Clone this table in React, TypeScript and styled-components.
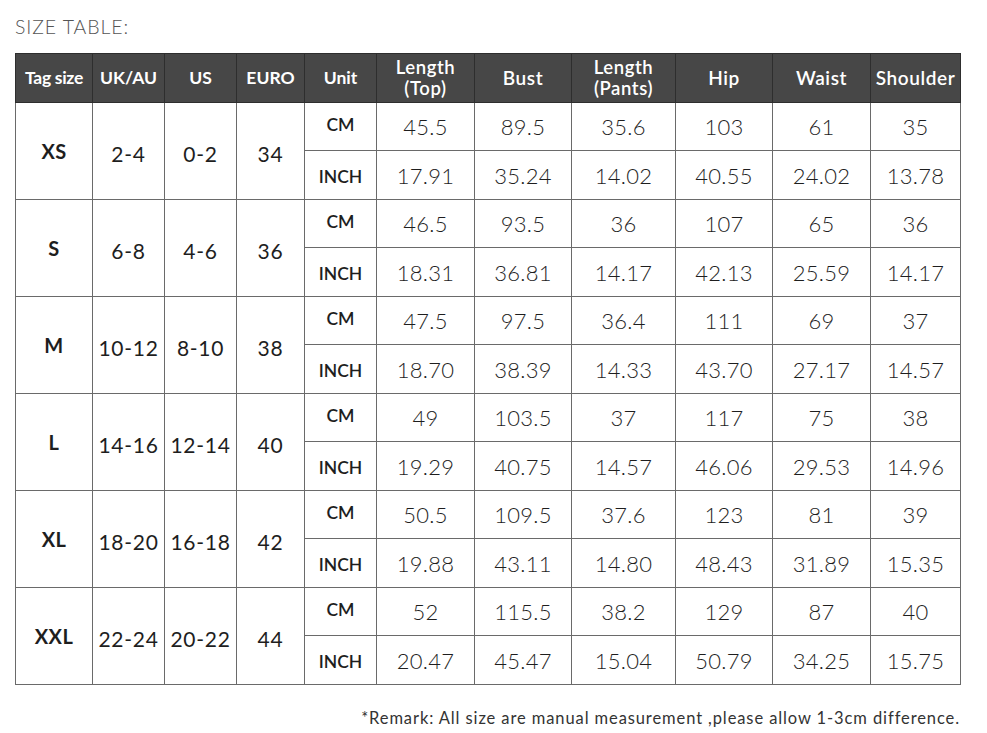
import React from 'react'
import styled, { createGlobalStyle } from 'styled-components'

const GlobalStyle = createGlobalStyle`
  html, body {
    margin: 0;
    padding: 0;
    background: #fff;
  }
  body {
    font-family: Lato, "Open Sans", "Liberation Sans", sans-serif;
    color: #222;
  }
`

type Row = {
  tag: string
  uk: string
  us: string
  euro: string
  cm: string[]
  inch: string[]
}

const rows: Row[] = [
  { tag: 'XS', uk: '2-4', us: '0-2', euro: '34', cm: ['45.5', '89.5', '35.6', '103', '61', '35'], inch: ['17.91', '35.24', '14.02', '40.55', '24.02', '13.78'] },
  { tag: 'S', uk: '6-8', us: '4-6', euro: '36', cm: ['46.5', '93.5', '36', '107', '65', '36'], inch: ['18.31', '36.81', '14.17', '42.13', '25.59', '14.17'] },
  { tag: 'M', uk: '10-12', us: '8-10', euro: '38', cm: ['47.5', '97.5', '36.4', '111', '69', '37'], inch: ['18.70', '38.39', '14.33', '43.70', '27.17', '14.57'] },
  { tag: 'L', uk: '14-16', us: '12-14', euro: '40', cm: ['49', '103.5', '37', '117', '75', '38'], inch: ['19.29', '40.75', '14.57', '46.06', '29.53', '14.96'] },
  { tag: 'XL', uk: '18-20', us: '16-18', euro: '42', cm: ['50.5', '109.5', '37.6', '123', '81', '39'], inch: ['19.88', '43.11', '14.80', '48.43', '31.89', '15.35'] },
  { tag: 'XXL', uk: '22-24', us: '20-22', euro: '44', cm: ['52', '115.5', '38.2', '129', '87', '40'], inch: ['20.47', '45.47', '15.04', '50.79', '34.25', '15.75'] },
]

const colWidths = [77, 72, 72, 68, 72, 98, 97, 104, 97, 98, 90]

export default function App() {
  return (
    <>
      <GlobalStyle />
      <Page>
        <Title>SIZE TABLE:</Title>
        <Table>
          <colgroup>
            {colWidths.map((w, i) => (
              <col key={i} style={{ width: w }} />
            ))}
          </colgroup>
          <thead>
            <tr>
              <HeadCell $tight>Tag size</HeadCell>
              <HeadCell>UK/AU</HeadCell>
              <HeadCell>US</HeadCell>
              <HeadCell>EURO</HeadCell>
              <HeadCell>Unit</HeadCell>
              <HeadCell $wide>
                <HeadLine>Length</HeadLine>
                <HeadLine>(Top)</HeadLine>
              </HeadCell>
              <HeadCell $wide>Bust</HeadCell>
              <HeadCell $wide>
                <HeadLine>Length</HeadLine>
                <HeadLine>(Pants)</HeadLine>
              </HeadCell>
              <HeadCell $wide>Hip</HeadCell>
              <HeadCell $wide>Waist</HeadCell>
              <HeadCell $wide>Shoulder</HeadCell>
            </tr>
          </thead>
          <tbody>
            {rows.map((r) => (
              <React.Fragment key={r.tag}>
                <CmRow>
                  <TagCell rowSpan={2}>{r.tag}</TagCell>
                  <SizeCell rowSpan={2}>{r.uk}</SizeCell>
                  <SizeCell rowSpan={2}>{r.us}</SizeCell>
                  <SizeCell rowSpan={2}>{r.euro}</SizeCell>
                  <UnitCell>CM</UnitCell>
                  {r.cm.map((v, i) => (
                    <ValueCell key={i}>{v}</ValueCell>
                  ))}
                </CmRow>
                <InchRow>
                  <UnitCell $low>INCH</UnitCell>
                  {r.inch.map((v, i) => (
                    <ValueCell key={i}>{v}</ValueCell>
                  ))}
                </InchRow>
              </React.Fragment>
            ))}
          </tbody>
        </Table>
        <Remark>*Remark: All size are manual measurement ,please allow 1-3cm difference.</Remark>
      </Page>
    </>
  )
}

const Page = styled.div`
  width: 987px;
  height: 733px;
  box-sizing: border-box;
  padding: 15px 27px 0 15px;
  overflow: hidden;
`

const Title = styled.div`
  font-family: Lato, "Liberation Sans", sans-serif;
  font-weight: 300;
  font-size: 19.5px;
  letter-spacing: 0.9px;
  color: #555;
  line-height: 24px;
  height: 38px;
`

const Table = styled.table`
  width: 946px;
  table-layout: fixed;
  border-collapse: collapse;
  border: 1px solid #666;
`

const HeadCell = styled.th<{ $tight?: boolean; $wide?: boolean }>`
  background: #474747;
  color: #fff;
  height: 48px;
  padding: 0;
  border: 1px solid #2e2e2e;
  font-family: Lato, "Liberation Sans", sans-serif;
  font-weight: ${(p) => (p.$wide ? 600 : 700)};
  font-size: ${(p) => (p.$wide ? '19px' : '17.5px')};
  letter-spacing: ${(p) => (p.$tight ? '-0.3px' : p.$wide ? '0.6px' : '0')};
  line-height: 22px;
  text-align: center;
  vertical-align: middle;
  white-space: nowrap;
`

const HeadLine = styled.div`
  display: block;
  font-size: 18.5px;
  line-height: 21px;
  height: 21px;
`

const CmRow = styled.tr`
  height: 48px;
`

const InchRow = styled.tr`
  height: 49px;
`

const BaseCell = styled.td`
  border: 1px solid #6a6a6a;
  padding: 0;
  text-align: center;
  vertical-align: middle;
  white-space: nowrap;
  color: #1e1e1e;
`

const TagCell = styled(BaseCell)`
  font-weight: 700;
  font-size: 20px;
  letter-spacing: 0.4px;
`

const SizeCell = styled(BaseCell)`
  font-weight: 400;
  font-size: 21px;
  letter-spacing: 0.7px;
  padding-top: 4px;
`

const UnitCell = styled(BaseCell)<{ $low?: boolean }>`
  font-weight: 600;
  font-size: 17.5px;
  letter-spacing: 0;
  padding-bottom: ${(p) => (p.$low ? '0' : '4px')};
  padding-top: ${(p) => (p.$low ? '3px' : '0')};
`

const ValueCell = styled(BaseCell)`
  font-weight: 300;
  font-size: 22px;
  letter-spacing: 0.3px;
`

const Remark = styled.div`
  margin-top: 23px;
  text-align: right;
  font-family: Lato, "Liberation Sans", sans-serif;
  font-weight: 400;
  font-size: 16.5px;
  letter-spacing: 0.9px;
  color: #333;
`
